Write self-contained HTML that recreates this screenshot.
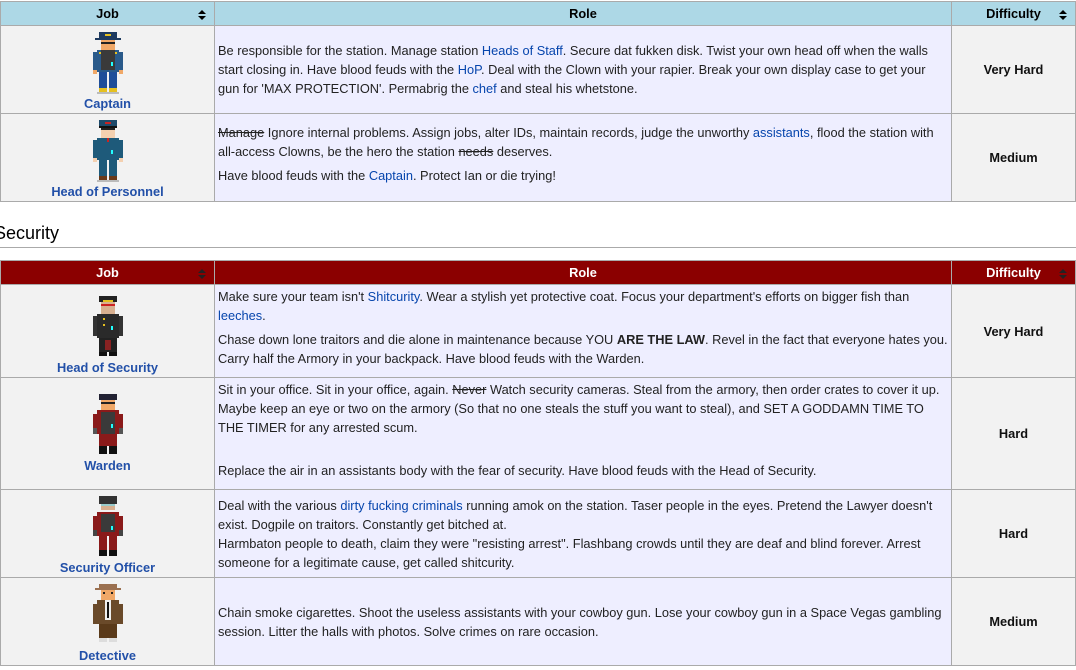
<!DOCTYPE html>
<html><head><meta charset="utf-8"><style>
body{margin:0;background:#fff;font-family:"Liberation Sans",Arial,sans-serif;font-size:12.8px;color:#222;width:1076px;height:670px;overflow:hidden;position:relative}
table{border-collapse:collapse;position:absolute;left:0;width:1076px;table-layout:fixed}
td,th{border:1px solid #aaa;padding:0 3px}
th{font-weight:bold;height:23px;position:relative;font-size:12.8px}
th svg.s{position:absolute;right:8px;top:8px}
.b th{background:#add8e6;color:#000}
.r th{background:#8b0000;color:#fff}
td.j{background:#f2f2f2;text-align:center;vertical-align:bottom;padding-bottom:1px}
td.j a{display:block;font-weight:bold;line-height:16px}
td.d{background:#f2f2f2;text-align:center;font-weight:bold;color:#111}
td.t{background:#eeeeff;line-height:19px;vertical-align:middle}
td.t p{margin:0}
td.t p+p{margin-top:5px}
td.t p+p:last-child{margin-bottom:8px}
a{color:#0645ad;text-decoration:none}
.j a{color:#2250a8}
td svg{display:block;margin:0 auto}
h2{position:absolute;left:-6px;top:222px;margin:0;font-weight:normal;font-size:18px;color:#000;width:1082px;border-bottom:1px solid #aaa;padding-bottom:3px;line-height:22px}
</style></head><body>
<table class="b" style="top:1px">
<colgroup><col style="width:214px"><col style="width:737px"><col></colgroup>
<tr><th>Job<svg class="s" width="8" height="10" viewBox="0 0 8 10"><path d="M0 4L4 0L8 4ZM0 6L8 6L4 10Z" fill="#000"/></svg></th><th>Role</th><th>Difficulty<svg class="s" width="8" height="10" viewBox="0 0 8 10"><path d="M0 4L4 0L8 4ZM0 6L8 6L4 10Z" fill="#000"/></svg></th></tr>
<tr style="height:88px"><td class="j">
<svg width="34" height="64" viewBox="0 0 17 32" shape-rendering="crispEdges"><rect x="4" y="0" width="9" height="3" fill="#1e3a5f"/><rect x="7" y="1" width="3" height="1" fill="#e5c020"/><rect x="2" y="3" width="13" height="1" fill="#1e3a5f"/><rect x="5" y="4" width="7" height="5" fill="#f0a868"/><rect x="5" y="5" width="7" height="1" fill="#222"/><rect x="3" y="9" width="11" height="11" fill="#2a5a8a"/><rect x="5" y="9" width="7" height="10" fill="#3a3a3a"/><rect x="4" y="10" width="1" height="1" fill="#e5c020"/><rect x="12" y="10" width="1" height="1" fill="#e5c020"/><rect x="10" y="15" width="1" height="2" fill="#2ff"/><rect x="1" y="10" width="2" height="10" fill="#2a5a8a"/><rect x="14" y="10" width="2" height="10" fill="#2a5a8a"/><rect x="1" y="19" width="2" height="2" fill="#f0a868"/><rect x="14" y="19" width="2" height="2" fill="#f0a868"/><rect x="4" y="20" width="4" height="8" fill="#1f4e99"/><rect x="9" y="20" width="4" height="8" fill="#1f4e99"/><rect x="4" y="28" width="4" height="2" fill="#e5c020"/><rect x="9" y="28" width="4" height="2" fill="#e5c020"/><rect x="3" y="30" width="11" height="1" fill="#bbb"/></svg>
<a>Captain</a></td>
<td class="t"><p>Be responsible for the station. Manage station <a>Heads of Staff</a>. Secure dat fukken disk. Twist your own head off when the walls start closing in. Have blood feuds with the <a>HoP</a>. Deal with the Clown with your rapier. Break your own display case to get your gun for 'MAX PROTECTION'. Permabrig the <a>chef</a> and steal his whetstone.</p></td>
<td class="d">Very Hard</td></tr>
<tr style="height:88px"><td class="j">
<svg width="34" height="64" viewBox="0 0 17 32" shape-rendering="crispEdges"><rect x="4" y="0" width="9" height="3" fill="#1e4a6a"/><rect x="7" y="1" width="3" height="1" fill="#c22"/><rect x="4" y="3" width="9" height="1" fill="#111"/><rect x="5" y="4" width="7" height="5" fill="#f4d0b0"/><rect x="5" y="4" width="7" height="1" fill="#222"/><rect x="3" y="9" width="11" height="11" fill="#1e5a7a"/><rect x="8" y="9" width="1" height="2" fill="#c22"/><rect x="10" y="15" width="1" height="2" fill="#2ff"/><rect x="1" y="10" width="2" height="10" fill="#1e5a7a"/><rect x="14" y="10" width="2" height="10" fill="#1e5a7a"/><rect x="1" y="19" width="2" height="2" fill="#f4d0b0"/><rect x="14" y="19" width="2" height="2" fill="#f4d0b0"/><rect x="4" y="20" width="4" height="8" fill="#1e5a7a"/><rect x="9" y="20" width="4" height="8" fill="#1e5a7a"/><rect x="4" y="28" width="4" height="2" fill="#6a3a1a"/><rect x="9" y="28" width="4" height="2" fill="#6a3a1a"/><rect x="3" y="30" width="11" height="1" fill="#bbb"/></svg>
<a>Head of Personnel</a></td>
<td class="t"><p><s>Manage</s> Ignore internal problems. Assign jobs, alter IDs, maintain records, judge the unworthy <a>assistants</a>, flood the station with all-access Clowns, be the hero the station <s>needs</s> deserves.</p><p>Have blood feuds with the <a>Captain</a>. Protect Ian or die trying!</p></td>
<td class="d">Medium</td></tr>
</table>
<h2>Security</h2>
<table class="r" style="top:260px">
<colgroup><col style="width:214px"><col style="width:737px"><col></colgroup>
<tr><th>Job<svg class="s" width="8" height="10" viewBox="0 0 8 10"><path d="M0 4L4 0L8 4ZM0 6L8 6L4 10Z" fill="#222"/></svg></th><th>Role</th><th>Difficulty<svg class="s" width="8" height="10" viewBox="0 0 8 10"><path d="M0 4L4 0L8 4ZM0 6L8 6L4 10Z" fill="#222"/></svg></th></tr>
<tr style="height:93px"><td class="j">
<svg width="34" height="64" viewBox="0 0 17 32" shape-rendering="crispEdges"><rect x="4" y="0" width="9" height="3" fill="#222"/><rect x="6" y="2" width="5" height="1" fill="#e5c020"/><rect x="5" y="3" width="7" height="6" fill="#d8b090"/><rect x="5" y="4" width="7" height="1" fill="#c22"/><rect x="3" y="9" width="11" height="12" fill="#2a2a2a"/><rect x="6" y="11" width="1" height="1" fill="#e5c020"/><rect x="6" y="14" width="1" height="1" fill="#e5c020"/><rect x="10" y="15" width="1" height="2" fill="#2ff"/><rect x="1" y="10" width="2" height="10" fill="#333"/><rect x="14" y="10" width="2" height="10" fill="#333"/><rect x="4" y="21" width="9" height="7" fill="#222"/><rect x="7" y="22" width="3" height="5" fill="#822"/><rect x="4" y="28" width="4" height="2" fill="#111"/><rect x="9" y="28" width="4" height="2" fill="#111"/></svg>
<a>Head of Security</a></td>
<td class="t"><p>Make sure your team isn't <a>Shitcurity</a>. Wear a stylish yet protective coat. Focus your department's efforts on bigger fish than <a>leeches</a>.</p><p>Chase down lone traitors and die alone in maintenance because YOU <b>ARE THE LAW</b>. Revel in the fact that everyone hates you. Carry half the Armory in your backpack. Have blood feuds with the Warden.</p></td>
<td class="d">Very Hard</td></tr>
<tr style="height:112px"><td class="j">
<svg width="34" height="64" viewBox="0 0 17 32" shape-rendering="crispEdges"><rect x="4" y="0" width="9" height="3" fill="#223"/><rect x="5" y="3" width="7" height="5" fill="#f0a868"/><rect x="5" y="4" width="7" height="1" fill="#222"/><rect x="3" y="8" width="11" height="12" fill="#8a1a1a"/><rect x="5" y="9" width="7" height="11" fill="#3a3a3a"/><rect x="10" y="15" width="1" height="2" fill="#2ff"/><rect x="1" y="10" width="2" height="10" fill="#8a1a1a"/><rect x="14" y="10" width="2" height="10" fill="#8a1a1a"/><rect x="1" y="17" width="2" height="3" fill="#555"/><rect x="14" y="17" width="2" height="3" fill="#555"/><rect x="4" y="20" width="9" height="6" fill="#8a1a1a"/><rect x="4" y="26" width="4" height="4" fill="#111"/><rect x="9" y="26" width="4" height="4" fill="#111"/></svg>
<a style="margin-bottom:14px">Warden</a></td>
<td class="t"><p>Sit in your office. Sit in your office, again. <s>Never</s> Watch security cameras. Steal from the armory, then order crates to cover it up. Maybe keep an eye or two on the armory (So that no one steals the stuff you want to steal), and SET A GODDAMN TIME TO THE TIMER for any arrested scum.<br><br></p><p>Replace the air in an assistants body with the fear of security. Have blood feuds with the Head of Security.</p></td>
<td class="d">Hard</td></tr>
<tr style="height:88px"><td class="j">
<svg width="34" height="64" viewBox="0 0 17 32" shape-rendering="crispEdges"><rect x="4" y="0" width="9" height="4" fill="#333"/><rect x="5" y="4" width="7" height="3" fill="#d8b090"/><rect x="5" y="4" width="7" height="1" fill="#9cc"/><rect x="3" y="8" width="11" height="12" fill="#8a1a1a"/><rect x="5" y="9" width="7" height="9" fill="#3a3a3a"/><rect x="10" y="15" width="1" height="2" fill="#2ff"/><rect x="1" y="10" width="2" height="10" fill="#8a1a1a"/><rect x="14" y="10" width="2" height="10" fill="#8a1a1a"/><rect x="1" y="17" width="2" height="3" fill="#444"/><rect x="14" y="17" width="2" height="3" fill="#444"/><rect x="4" y="20" width="4" height="7" fill="#8a1a1a"/><rect x="9" y="20" width="4" height="7" fill="#8a1a1a"/><rect x="4" y="27" width="4" height="3" fill="#111"/><rect x="9" y="27" width="4" height="3" fill="#111"/></svg>
<a>Security Officer</a></td>
<td class="t"><p>Deal with the various <a>dirty fucking criminals</a> running amok on the station. Taser people in the eyes. Pretend the Lawyer doesn't exist. Dogpile on traitors. Constantly get bitched at.<br>Harmbaton people to death, claim they were "resisting arrest". Flashbang crowds until they are deaf and blind forever. Arrest someone for a legitimate cause, get called shitcurity.</p></td>
<td class="d">Hard</td></tr>
<tr style="height:88px"><td class="j">
<svg width="34" height="64" viewBox="0 0 17 32" shape-rendering="crispEdges"><rect x="4" y="0" width="9" height="2" fill="#9a7050"/><rect x="2" y="2" width="13" height="1" fill="#9a7050"/><rect x="5" y="3" width="7" height="5" fill="#f0a868"/><rect x="6" y="4" width="1" height="1" fill="#222"/><rect x="10" y="4" width="1" height="1" fill="#222"/><rect x="3" y="8" width="11" height="12" fill="#6a4a2a"/><rect x="7" y="8" width="3" height="10" fill="#eee"/><rect x="8" y="9" width="1" height="8" fill="#111"/><rect x="1" y="10" width="2" height="10" fill="#6a4a2a"/><rect x="14" y="10" width="2" height="10" fill="#6a4a2a"/><rect x="4" y="20" width="9" height="7" fill="#5a3a1a"/><rect x="4" y="27" width="4" height="2" fill="#ddd"/><rect x="9" y="27" width="4" height="2" fill="#ddd"/></svg>
<a>Detective</a></td>
<td class="t"><p>Chain smoke cigarettes. Shoot the useless assistants with your cowboy gun. Lose your cowboy gun in a Space Vegas gambling session. Litter the halls with photos. Solve crimes on rare occasion.</p></td>
<td class="d">Medium</td></tr>
</table>
</body></html>
